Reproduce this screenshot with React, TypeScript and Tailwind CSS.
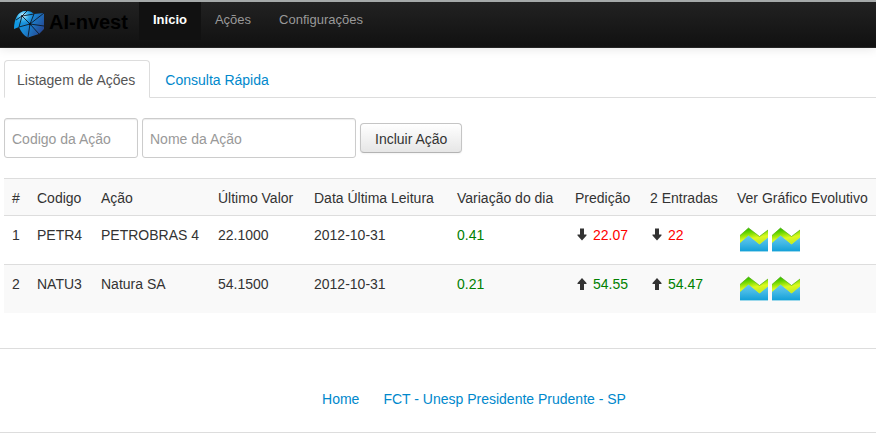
import React from 'react';

type Trend = 'up' | 'down';

interface Stock {
  id: number;
  code: string;
  name: string;
  last: string;
  date: string;
  change: string;
  prediction: string;
  twoInputs: string;
  trend: Trend;
}

const stocks: Stock[] = [
  { id: 1, code: 'PETR4', name: 'PETROBRAS 4', last: '22.1000', date: '2012-10-31', change: '0.41', prediction: '22.07', twoInputs: '22', trend: 'down' },
  { id: 2, code: 'NATU3', name: 'Natura SA', last: '54.1500', date: '2012-10-31', change: '0.21', prediction: '54.55', twoInputs: '54.47', trend: 'up' },
];

const headers = ['#', 'Codigo', 'Ação', 'Último Valor', 'Data Última Leitura', 'Variação do dia', 'Predição', '2 Entradas', 'Ver Gráfico Evolutivo'];

function Logo() {
  return (
    <svg className="h-7 w-8 shrink-0" viewBox="0 0 32 28" aria-hidden="true">
      <defs>
        <linearGradient id="globe" x1="0" y1="0.2" x2="1" y2="0.7">
          <stop offset="0" stopColor="#0ba3ec" />
          <stop offset="0.5" stopColor="#1a86d3" />
          <stop offset="1" stopColor="#26458f" />
        </linearGradient>
        <radialGradient id="shine" cx="0.3" cy="0.17" r="0.35">
          <stop offset="0" stopColor="#e2f7ff" />
          <stop offset="0.45" stopColor="#58c4f3" stopOpacity="0.8" />
          <stop offset="1" stopColor="#1590da" stopOpacity="0" />
        </radialGradient>
      </defs>
      <path d="M1 19C1 9 5 1 13 1c4 0 6 1 8 3l10-1v16l-5 5-11 3.500C11 26 8 22 6 17z" fill="url(#globe)" />
      <path d="M1 19C1 9 5 1 13 1c4 0 6 1 8 3l10-1v16l-5 5-11 3.500C11 26 8 22 6 17z" fill="url(#shine)" />
      <path
        d="M17 14L9 6M17 14l4-10M17 14L31 3M17 14l14 2M17 14l9 10M17 14l-2 13M17 14L6 17M9 6L6 17M9 6l5-5M9 6L3 10M9 6l12-2"
        fill="none"
        stroke="#0d1926"
        strokeWidth="0.9"
      />
      <circle cx="17" cy="14" r="1.3" fill="#0b1520" />
      <circle cx="9" cy="6" r="0.9" fill="#0b1520" />
    </svg>
  );
}

function ArrowIcon({ trend }: { trend: Trend }) {
  return (
    <svg className="h-[14px] w-[14px] shrink-0" viewBox="0 0 14 14" role="img" aria-label={trend === 'up' ? 'Alta' : 'Baixa'}>
      <path
        d={trend === 'up' ? 'M7 1l4.500 5v1H9v6H5V7H2.500V6z' : 'M7 12.500l4.500-5v-1H9V.5H5v6H2.500v1z'}
        fill="#333"
      />
    </svg>
  );
}

function ChartIcon() {
  return (
    <svg className="size-8 shrink-0" viewBox="0 0 32 32" aria-hidden="true">
      <defs>
        <linearGradient id="band" x1="0" y1="0" x2="0.3" y2="1">
          <stop offset="0" stopColor="#0fb000" />
          <stop offset="0.35" stopColor="#6fd800" />
          <stop offset="0.7" stopColor="#dcfa20" />
          <stop offset="1" stopColor="#c8ed20" />
        </linearGradient>
        <linearGradient id="water" x1="0" y1="0" x2="0" y2="1">
          <stop offset="0" stopColor="#69c8ed" />
          <stop offset="0.5" stopColor="#42b8e5" />
          <stop offset="1" stopColor="#129fd8" />
        </linearGradient>
      </defs>
      <path d="M3 17l8.500-7L22.500 19l8.500-7v14.500H3z" fill="url(#water)" />
      <path d="M3 10.500L11.500 3l11 8.500L31 5v7.500l-8.500 7-11-9L3 18z" fill="url(#band)" />
      <path d="M3 10.500L11.500 3l11 8.500L31 5" fill="none" stroke="#54ad0a" strokeWidth="0.7" />
      <path d="M3 26.500h28" stroke="#a6dced" strokeWidth="0.7" />
    </svg>
  );
}

function Prediction({ trend, value }: { trend: Trend; value: string }) {
  return (
    <span className="flex items-center gap-1">
      <ArrowIcon trend={trend} />
      <span className={trend === 'up' ? 'text-[#008000]' : 'text-[#ff0000]'}>{value}</span>
    </span>
  );
}

export default function App() {
  return (
    <div className="bg-white font-['Helvetica_Neue','Liberation_Sans',Arial,sans-serif] text-sm leading-5 text-[#333]">
      <header className="flex h-12 items-start border-t-2 border-b border-t-[#a5a9a9] border-b-[#252525] bg-linear-to-b from-[#222] to-[#111] pl-[13px] shadow-[0_1px_10px_rgba(0,0,0,0.1)]">
        <a href="#inicio" className="flex h-10 w-[126px] items-center gap-1 pt-1 text-xl font-bold whitespace-nowrap text-black">
          <Logo />
          <span className="-mt-1">AI-nvest</span>
        </a>
        <nav className="flex text-[13px] leading-5">
          <a href="#inicio" aria-current="page" className="bg-[#111] px-[14px] pt-2 pb-[10px] font-bold text-white">Início</a>
          <a href="#acoes" className="px-[14px] pt-2 pb-[10px] text-[#999]">Ações</a>
          <a href="#configuracoes" className="px-[14px] pt-2 pb-[10px] text-[#999]">Configurações</a>
        </nav>
      </header>

      <main className="pt-3 pl-1">
        <nav className="flex border-b border-[#ddd]">
          <a href="#listagem" aria-current="page" className="-mb-px rounded-t border border-[#ddd] border-b-white bg-white pt-[9px] pr-[14px] pb-[7px] pl-3 text-[#555]">Listagem de Ações</a>
          <a href="#consulta" className="px-[15px] pt-[10px] pb-[7px] text-[#0088cc]">Consulta Rápida</a>
        </nav>

        <form className="mt-5 flex items-center gap-1" onSubmit={(e) => e.preventDefault()}>
          <input type="text" aria-label="Codigo da Ação" placeholder="Codigo da Ação" className="h-10 w-[134px] rounded-[3px] border border-[#ccc] px-[7px] pt-0.5 shadow-[inset_0_1px_1px_rgba(0,0,0,0.075)] placeholder:text-[#999]" />
          <input type="text" aria-label="Nome da Ação" placeholder="Nome da Ação" className="h-10 w-[214px] rounded-[3px] border border-[#ccc] px-[7px] pt-0.5 shadow-[inset_0_1px_1px_rgba(0,0,0,0.075)] placeholder:text-[#999]" />
          <button type="submit" className="rounded border border-[#c5c5c5] border-b-[#b3b3b3] bg-linear-to-b from-white to-[#e6e6e6] px-[14px] pt-[5px] pb-[3px] whitespace-nowrap shadow-[0_1px_2px_rgba(0,0,0,0.05)]">Incluir Ação</button>
        </form>

        <table className="mt-5 w-full table-fixed border-separate border-spacing-0 text-left whitespace-nowrap">
          <colgroup>
            <col className="w-[25px]" />
            <col className="w-16" />
            <col className="w-[117px]" />
            <col className="w-24" />
            <col className="w-[143px]" />
            <col className="w-[118px]" />
            <col className="w-[75px]" />
            <col className="w-[87px]" />
            <col />
          </colgroup>
          <thead>
            <tr className="bg-[#f9f9f9]">
              {headers.map((h) => (
                <th key={h} scope="col" className="border-t border-[#ddd] pt-[9px] pb-[7px] pl-2 font-normal">{h}</th>
              ))}
            </tr>
          </thead>
          <tbody className="[&_td]:border-t [&_td]:border-[#ddd] [&_td]:pt-[9px] [&_td]:pb-[7px] [&_td]:pl-2 [&_td]:align-top">
            {stocks.map((s) => (
              <tr key={s.id} className="even:bg-[#f9f9f9]">
                <td>{s.id}</td>
                <td>{s.code}</td>
                <td>{s.name}</td>
                <td>{s.last}</td>
                <td>{s.date}</td>
                <td className="text-[#008000]">{s.change}</td>
                <td><Prediction trend={s.trend} value={s.prediction} /></td>
                <td><Prediction trend={s.trend} value={s.twoInputs} /></td>
                <td>
                  <span className="flex">
                    <a href="#grafico" aria-label={`Gráfico de ${s.code}`}><ChartIcon /></a>
                    <a href="#grafico-evolutivo" aria-label={`Gráfico evolutivo de ${s.code}`}><ChartIcon /></a>
                  </span>
                </td>
              </tr>
            ))}
          </tbody>
        </table>
      </main>

      <footer className="mt-[35px] flex justify-center gap-6 border-y border-[#ddd] pt-10 pb-[23px] pl-[72px] text-[#0088cc]">
        <a href="#home">Home</a>
        <a href="#fct">FCT - Unesp Presidente Prudente - SP</a>
      </footer>
    </div>
  );
}
